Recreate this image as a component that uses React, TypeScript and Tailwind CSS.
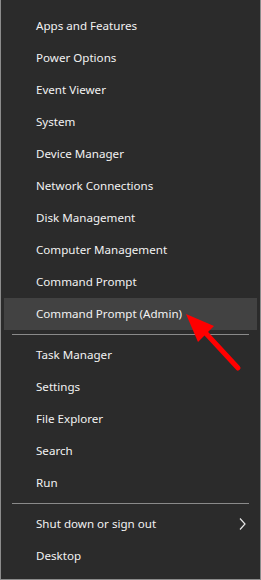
const groups: string[][] = [
  [
    'Apps and Features',
    'Power Options',
    'Event Viewer',
    'System',
    'Device Manager',
    'Network Connections',
    'Disk Management',
    'Computer Management',
    'Command Prompt',
    'Command Prompt (Admin)',
  ],
  ['Task Manager', 'Settings', 'File Explorer', 'Search', 'Run'],
]

function Item({ label, active, sub }: { label: string; active?: boolean; sub?: boolean }) {
  return (
    <div className={`relative mx-[3px] flex h-8 items-center pl-[32px] text-[11.6px] text-[#f2f2f2] ${active ? 'bg-[#424242]' : ''}`}>
      <span>{label}</span>
      {sub && (
        <svg className="absolute right-[11px]" width="7" height="12" viewBox="0 0 7 12">
          <path d="M1 0.5 L6 6 L1 11.5" fill="none" stroke="#e6e6e6" strokeWidth="1.2" />
        </svg>
      )}
    </div>
  )
}

function Divider() {
  return (
    <div className="py-[4px]">
      <div className="mx-[11px] h-px bg-[#8a8a8a]" />
    </div>
  )
}

export default function App() {
  return (
    <div className="relative h-[580px] w-[261px] border-x border-b border-[#8c8c8c] bg-[#2b2b2b] pt-[10px]" style={{ fontFamily: '"Noto Sans", "Open Sans", Arial, sans-serif' }}>
      {groups[0].map(l => <Item key={l} label={l} active={l === 'Command Prompt (Admin)'} />)}
      <Divider />
      {groups[1].map(l => <Item key={l} label={l} />)}
      <Divider />
      <Item label="Shut down or sign out" sub />
      <Item label="Desktop" />

      {/* red arrow pointing at the admin prompt */}
      <svg className="absolute left-0 top-0" width="261" height="580">
        <line x1="237" y1="368" x2="200" y2="328" stroke="#ff0000" strokeWidth="5" strokeLinecap="round" />
        <polygon points="185,314 197,342 213,326" fill="#ff0000" />
      </svg>
    </div>
  )
}
